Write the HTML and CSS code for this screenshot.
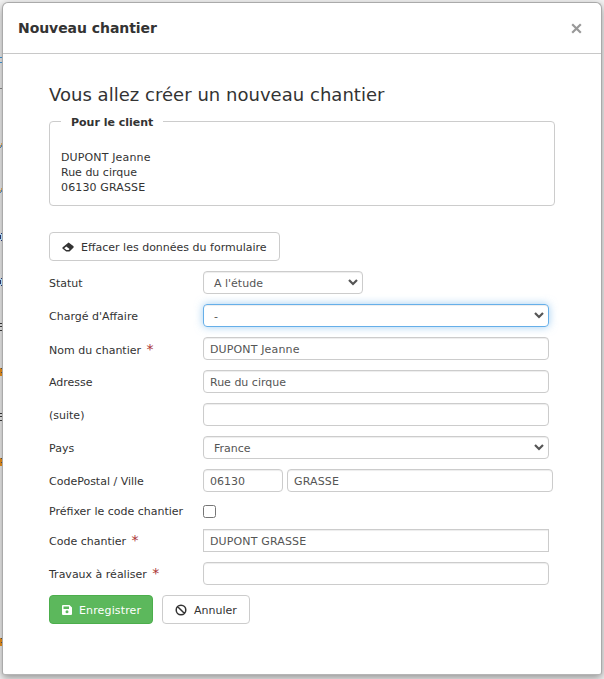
FILE: index.html
```html
<!DOCTYPE html>
<html lang="fr">
<head>
<meta charset="utf-8">
<title>Nouveau chantier</title>
<link rel="stylesheet" href="styles.css">
</head>
<body>
<svg class="backdrop" width="2" height="679" viewBox="0 0 2 679" shape-rendering="crispEdges" aria-hidden="true">
  <path fill="#3b86c0" d="M0 57h2v1H0zM0 62h2v1H0z"/>
  <path fill="#777" d="M0 88h2v1H0z"/>
  <path fill="#c79a5c" d="M1 143h1v2H1zM0 145h1v2H0zM1 188h1v2H1zM0 190h1v2H0z"/>
  <path fill="#4b82b5" d="M1 145h1v2H1zM0 147h1v1H0zM1 190h1v2H1zM0 192h1v1H0z"/>
  <path fill="#a9d3ee" d="M0 234h2v6H0zM0 279h2v6H0z"/>
  <path fill="#24336b" d="M1 233h1v1H1zM0 235h1v4H0zM1 240h1v1H1zM1 278h1v1H1zM0 280h1v4H0zM1 285h1v1H1z"/>
  <path fill="#333" d="M0 323h2v1H0zM0 326h2v1H0zM0 330h2v1H0zM0 413h2v1H0zM0 416h2v1H0zM0 420h2v1H0z"/>
  <path fill="#cd7d16" d="M0 368h2v8H0zM0 458h2v8H0zM0 638h2v8H0z"/>
  <path fill="#4c4a45" d="M1 368h1v1H1zM1 372h1v1H1zM1 458h1v1H1zM1 462h1v1H1zM1 638h1v1H1zM1 642h1v1H1z"/>
</svg>
<div class="modal">
  <header class="modal-header">
    <h1>Nouveau chantier</h1>
    <svg class="close" width="11" height="11" viewBox="0 0 11 11" aria-label="Fermer"><path d="M1.2 1.2L9.8 9.8M9.8 1.2L1.2 9.8"/></svg>
  </header>
  <main class="modal-body">
    <h2>Vous allez créer un nouveau chantier</h2>
    <fieldset class="client">
      <legend>Pour le client</legend>
      <div class="wide">DUPONT Jeanne</div>
      <div>Rue du cirque</div>
      <div class="wide">06130 GRASSE</div>
    </fieldset>
    <button class="btn clear" type="button">
      <svg width="12" height="10" viewBox="0 0 12 10"><path fill="#333" fill-rule="evenodd" d="M6.600.500L11.600 4.200V5.600L7.500 9.500H4.200L.400 6.500V5.500ZM2.200 6.200L4.500 8.100H6.600L7.600 7L4.300 4.500Z"/></svg>
      <span>Effacer les données du formulaire</span>
    </button>
    <form class="form">
      <div class="row"><label>Statut</label><div class="control select short"><span>A l'étude</span><svg class="arrow" width="10" height="7" viewBox="0 0 10 7"><path d="M1 1L5 5L9 1"/></svg></div></div>
      <div class="row"><label>Chargé d'Affaire</label><div class="control select focus"><span>-</span><svg class="arrow" width="10" height="7" viewBox="0 0 10 7"><path d="M1 1L5 5L9 1"/></svg></div></div>
      <div class="row"><label class="low">Nom du chantier <b>*</b></label><div class="control"><span class="wide">DUPONT Jeanne</span></div></div>
      <div class="row"><label>Adresse</label><div class="control"><span>Rue du cirque</span></div></div>
      <div class="row"><label>(suite)</label><div class="control"></div></div>
      <div class="row"><label>Pays</label><div class="control select"><span>France</span><svg class="arrow" width="10" height="7" viewBox="0 0 10 7"><path d="M1 1L5 5L9 1"/></svg></div></div>
      <div class="row"><label>CodePostal / Ville</label><div class="control zip"><span>06130</span></div><div class="control city"><span class="wide">GRASSE</span></div></div>
      <div class="row check"><label>Préfixer le code chantier</label><span class="checkbox"></span></div>
      <div class="row"><label>Code chantier <b>*</b></label><div class="control square"><span class="wide">DUPONT GRASSE</span></div></div>
      <div class="row"><label>Travaux à réaliser <b>*</b></label><div class="control"></div></div>
    </form>
    <div class="actions">
      <button class="btn save" type="button">
        <svg width="10" height="10" viewBox="0 0 10 10"><path fill="#fff" fill-rule="evenodd" d="M1 0H7.500L10 2.500V9Q10 10 9 10H1Q0 10 0 9V1Q0 0 1 0ZM1.500 1.500V4H7V1.500ZM5 5.300A1.500 1.500 0 1 0 5 8.300A1.500 1.500 0 1 0 5 5.300Z"/></svg>
        <span class="wide">Enregistrer</span>
      </button>
      <button class="btn cancel" type="button">
        <svg width="12" height="12" viewBox="0 0 12 12"><path fill="none" stroke="#333" stroke-width="1.500" d="M6 1.200A4.800 4.800 0 1 0 6 10.800A4.800 4.800 0 1 0 6 1.200ZM2.700 2.700L9.300 9.300"/></svg>
        <span>Annuler</span>
      </button>
    </div>
  </main>
</div>
</body>
</html>
```
FILE: styles.css
```css
* { box-sizing: border-box; }
html, body { margin: 0; height: 679px; overflow: hidden; }
body {
  padding: 2px 0 0 2px;
  background: #f3f3f3;
  color: #333;
  font: 11px/15px Verdana, "DejaVu Sans", sans-serif;
}
.backdrop { position: absolute; left: 0; top: 0; z-index: 2; }
.modal {
  width: 600px;
  height: 673px;
  background: #fff;
  border: 1px solid #aaa;
  border-bottom-color: #b5b5b5;
  border-radius: 6px 6px 3px 3px;
  box-shadow: 0 3px 9px rgba(0, 0, 0, .4);
}
.modal-header {
  height: 51px;
  padding: 0 19px 0 15px;
  display: flex;
  align-items: center;
  justify-content: space-between;
  border-bottom: 1px solid #c8c8c8;
}
h1 { margin: 0; font-size: 14px; line-height: 20px; font-weight: bold; letter-spacing: -.06px; }
.close { fill: none; stroke: #999; stroke-width: 2.2; margin-top: 1px; }
.modal-body { padding: 29px 46px 0; }
h2 { margin: 0; font-size: 18px; line-height: 24px; font-weight: normal; white-space: nowrap; letter-spacing: .03px; }
.client {
  margin: 8px 0 0;
  width: 506px;
  height: 91px;
  padding: 0 11px;
  border: 1px solid #ccc;
  border-radius: 4px;
}
.client legend {
  height: 13px;
  margin-bottom: 22px;
  padding: 0 10px;
  font-weight: bold;
}
.client div { line-height: 15px; }
.wide { letter-spacing: .14px; }
.btn {
  display: flex;
  align-items: center;
  height: 29px;
  padding: 0 12px;
  border: 1px solid #ccc;
  border-radius: 4px;
  background: #fff;
  color: #333;
  font: inherit;
  white-space: nowrap;
}
.btn svg { flex: none; }
.btn span { padding-top: 2px; }
.clear { width: 231px; margin: 26px 0 10px; gap: 7px; }
.form { display: flex; flex-direction: column; gap: 10px; }
.row { display: flex; align-items: center; height: 23px; }
.row label { width: 154px; padding-top: 2px; white-space: nowrap; }
.row .low { padding-top: 4px; }
.row label b {
  margin-left: 2px;
  color: #a33;
  font-size: 14px;
  font-weight: normal;
  line-height: 10px;
}
.control {
  display: flex;
  align-items: center;
  width: 346px;
  height: 23px;
  padding: 0 6px;
  border: 1px solid #ccc;
  border-radius: 4px;
  box-shadow: inset 0 1px 1px rgba(0, 0, 0, .075);
  color: #555;
}
.control span { padding-top: 2px; }
.select { justify-content: space-between; padding: 0 4px 0 10px; }
.short { width: 160px; }
.focus {
  border-color: #66afe9;
  box-shadow: inset 0 1px 1px rgba(0, 0, 0, .075), 0 0 8px rgba(102, 175, 233, .6);
}
.arrow { fill: none; stroke: #555; stroke-width: 2.2; }
.zip { width: 80px; margin-right: 4px; }
.city { width: 266px; }
.square { border-radius: 0; }
.check { height: 17px; }
.checkbox { width: 13px; height: 13px; margin-top: 2px; border: 1px solid #767676; border-radius: 2.500px; }
.actions { display: flex; gap: 9px; margin-top: 10px; }
.save { width: 104px; gap: 7px; background: #5cb85c; border-color: #4cae4c; color: #fff; }
.cancel { width: 88px; gap: 7px; }
```
